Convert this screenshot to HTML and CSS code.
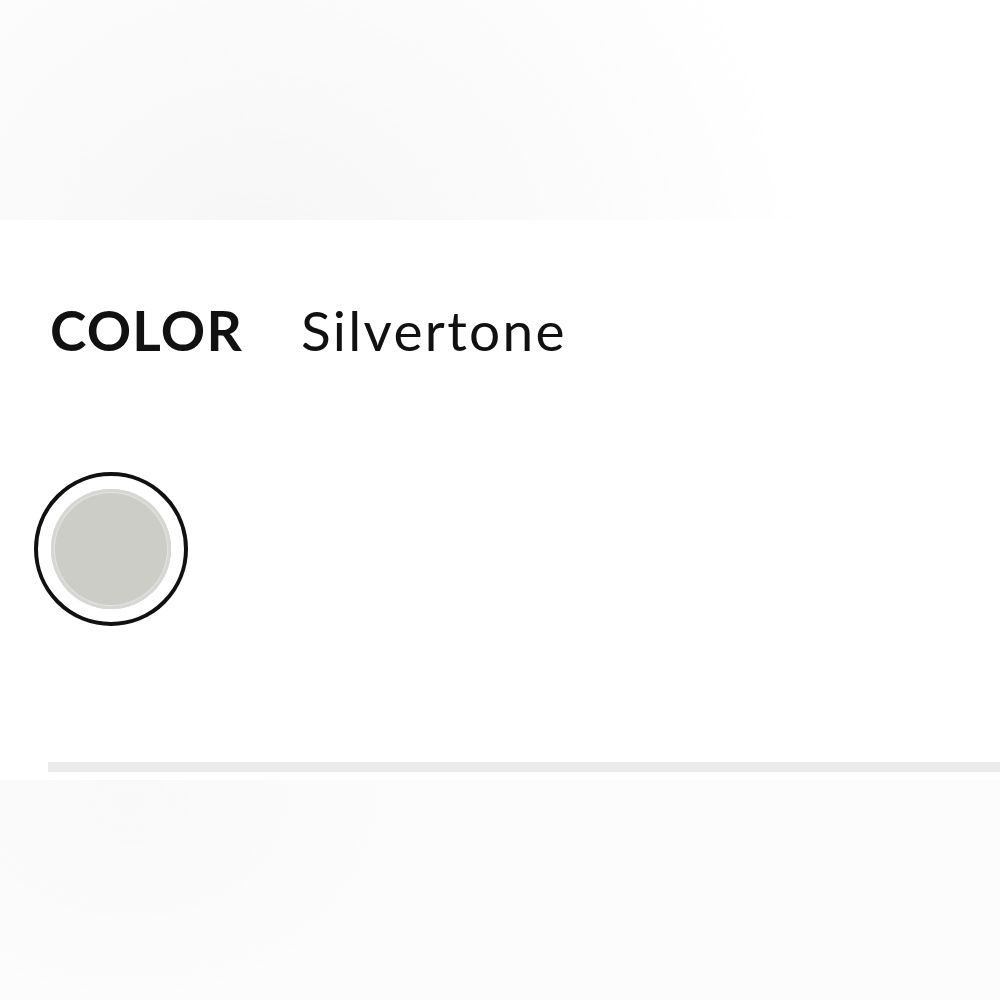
FILE: index.html
```html
<!DOCTYPE html>
<html lang="en">
<head>
    <meta charset="UTF-8">
    <meta name="viewport" content="width=device-width, initial-scale=1.0">
    <title>Color option</title>
    <link rel="stylesheet" href="styles.css">
</head>
<body>

    <!-- Faded area above the option -->
    <div class="fade-top"></div>

    <!-- Color picker -->
    <section class="option">
        <div class="option-label">
            <span class="option-name">COLOR</span>
            <span class="option-value">Silvertone</span>
        </div>

        <div class="swatches">
            <button class="swatch is-selected" title="Silvertone">
                <span class="swatch-fill"></span>
            </button>
        </div>

        <div class="divider"></div>
    </section>

    <!-- Faded area below the option -->
    <div class="fade-bottom"></div>

</body>
</html>
```

FILE: styles.css
```css
/* Reset styles */
* {
    margin: 0;
    padding: 0;
    box-sizing: border-box;
}

body {
    font-family: 'Lato', 'Liberation Sans', sans-serif;
    background: #fff;
    color: #111;
    width: 1000px;
    height: 1000px;
    overflow: hidden;
}

/* Faded top and bottom bands */
.fade-top {
    height: 220px;
    background: radial-gradient(circle 560px at 255px 290px, #f6f6f6 0%, #f9f9f9 35%, #fcfcfc 70%, #fff 100%);
}

.fade-bottom {
    height: 220px;
    background: radial-gradient(ellipse 300px 220px at 130px 20px, #f9f9f9 0%, #fcfcfc 100%);
}

/* Option panel */
.option {
    height: 560px;
    padding: 78px 0 0 48px;
    display: flex;
    flex-direction: column;
}

.option-label {
    display: flex;
    align-items: baseline;
    gap: 58px;
    padding-left: 2px;
    font-size: 55px;
    line-height: 64px;
}

.option-name {
    font-weight: 700;
    letter-spacing: 1.2px;
}

.option-value {
    font-weight: 400;
    letter-spacing: 2.3px;
}

.swatches {
    display: flex;
    margin-top: 110px;
    margin-left: -14px;
}

.swatch {
    width: 154px;
    height: 154px;
    border: 4px solid #111;
    border-radius: 50%;
    background: #fff;
    display: flex;
    justify-content: center;
    align-items: center;
    cursor: pointer;
}

.swatch-fill {
    width: 120px;
    height: 120px;
    border-radius: 50%;
    background: #cdcdc8;
    box-shadow: inset 0 0 0 3px #d6d6d3, inset 0 0 0 4px #e2e2e0;
}

.divider {
    margin-top: auto;
    margin-bottom: 8px;
    height: 10px;
    background: #ebebeb;
}
```
